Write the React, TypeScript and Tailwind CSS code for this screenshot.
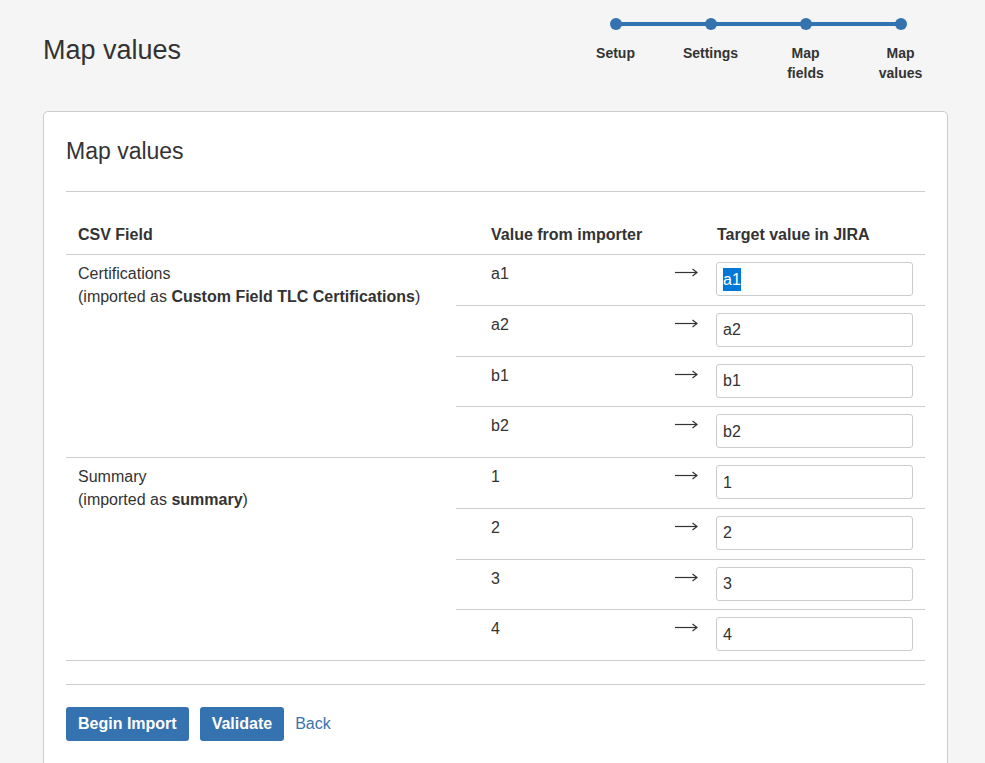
import type { ReactNode } from "react"

type ValueRow = {
  readonly from: string
  readonly target: string
  readonly selected?: boolean
}

type FieldGroup = {
  readonly name: string
  readonly importedAs: string
  readonly rows: readonly ValueRow[]
}

const steps = [
  { key: "setup", lines: ["Setup"] },
  { key: "settings", lines: ["Settings"] },
  { key: "fields", lines: ["Map", "fields"] },
  { key: "values", lines: ["Map", "values"] },
] as const

const groups: readonly FieldGroup[] = [
  {
    name: "Certifications",
    importedAs: "Custom Field TLC Certifications",
    rows: [
      { from: "a1", target: "a1", selected: true },
      { from: "a2", target: "a2" },
      { from: "b1", target: "b1" },
      { from: "b2", target: "b2" },
    ],
  },
  {
    name: "Summary",
    importedAs: "summary",
    rows: [
      { from: "1", target: "1" },
      { from: "2", target: "2" },
      { from: "3", target: "3" },
      { from: "4", target: "4" },
    ],
  },
]

function Arrow() {
  return (
    <svg width="23" height="9" viewBox="0 0 23 9" aria-hidden className="block">
      <path d="M0 4.5H22" stroke="#333" strokeWidth="1.2" fill="none" />
      <path d="M17.5 1L22 4.5L17.5 8" stroke="#333" strokeWidth="1.2" fill="none" />
    </svg>
  )
}

function ProgressTracker() {
  return (
    <div className="relative flex">
      <div className="absolute left-[47.5px] right-[47.5px] top-[22px] h-[4px] bg-[#3572b0]" />
      {steps.map((step) => (
        <div key={step.key} className="relative flex w-[95px] flex-col items-center">
          <div className="mt-[18px] size-[12px] rounded-full bg-[#3572b0]" />
          <div className="mt-[13px] text-center text-[14px] font-bold leading-[20px] text-[#333]">
            {step.lines.map((line) => (
              <div key={line}>{line}</div>
            ))}
          </div>
        </div>
      ))}
    </div>
  )
}

function FakeInput({ children }: { readonly children: ReactNode }) {
  return (
    <div className="flex h-[34px] w-[197px] items-center rounded-[3px] border border-[#ccc] bg-white px-[6px] text-[16px] text-[#333]">
      {children}
    </div>
  )
}

export default function App() {
  return (
    <div className="min-h-[763px] bg-[#f5f5f5] pl-[43px] pr-[37px] font-['Liberation_Sans',Arial,sans-serif] text-[16px] text-[#333]">
      <header className="flex h-[111px] justify-between">
        <h1 className="mt-[34px] text-[27px] leading-[32px] font-normal">Map values</h1>
        <ProgressTracker />
      </header>

      <main className="rounded-[5px] border border-[#ccc] bg-white px-[22px] pt-[24px] pb-[40px]">
        <h2 className="text-[23px] leading-[30px] font-normal">Map values</h2>
        <hr className="mt-[25px] border-t border-[#ccc]" />

        <table className="mt-[19px] w-full table-fixed border-collapse leading-[23px]">
          <colgroup>
            <col className="w-[390px]" />
            <col className="w-[204px]" />
            <col className="w-[50px]" />
            <col />
          </colgroup>
          <thead>
            <tr className="text-left font-bold">
              <th className="px-[12px] pt-[12px] pb-[8px]">CSV Field</th>
              <th className="pl-[35px] pt-[12px] pb-[8px]">Value from importer</th>
              <th />
              <th className="pl-[7px] pt-[12px] pb-[8px]">Target value in JIRA</th>
            </tr>
          </thead>
          <tbody>
            {groups.map((group) =>
              group.rows.map((row, i) => (
                <tr key={`${group.name}-${row.from}`} className="h-[50.75px]">
                  {i === 0 ? (
                    <td
                      rowSpan={group.rows.length}
                      className="border-t border-b border-[#ccc] px-[12px] pt-[7px] align-top"
                    >
                      {group.name}
                      <br />
                      (imported as <b>{group.importedAs}</b>)
                    </td>
                  ) : null}
                  <td className="border-t border-b border-[#ccc] pl-[35px] pt-[7px] align-top">
                    {row.from}
                  </td>
                  <td className="border-t border-b border-[#ccc] pt-[13px] pl-[15px] align-top">
                    <Arrow />
                  </td>
                  <td className="border-t border-b border-[#ccc] pl-[6px] pt-[7px] align-top">
                    <FakeInput>
                      {row.selected ? (
                        <span className="bg-[#0078d7] text-white">{row.target}</span>
                      ) : (
                        row.target
                      )}
                    </FakeInput>
                  </td>
                </tr>
              )),
            )}
          </tbody>
        </table>

        <hr className="mt-[23px] border-t border-[#ccc]" />

        <div className="mt-[22px] flex items-center gap-[11px]">
          <button
            type="button"
            className="h-[34px] rounded-[3px] bg-[#3572b0] px-[12px] font-bold text-white"
          >
            Begin Import
          </button>
          <button
            type="button"
            className="h-[34px] rounded-[3px] bg-[#3572b0] px-[12px] font-bold text-white"
          >
            Validate
          </button>
          <a href="#" className="text-[#3b73af]">
            Back
          </a>
        </div>
      </main>
    </div>
  )
}
